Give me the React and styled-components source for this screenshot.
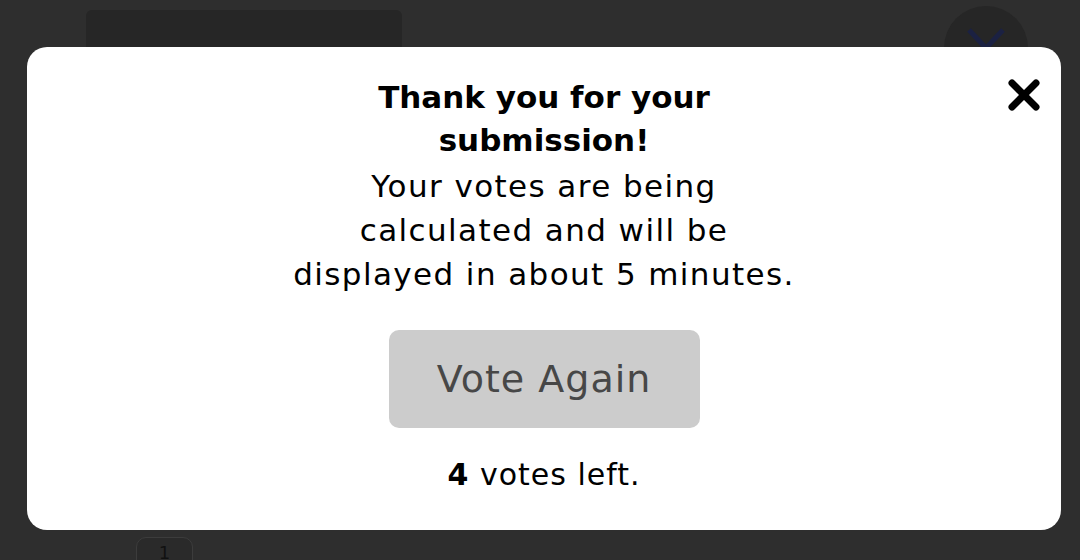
import React from "react"
import styled, { createGlobalStyle } from "styled-components"

const GlobalStyle = createGlobalStyle`
    html, body {
        margin: 0;
        padding: 0;
        height: 100%;
        background: #2e2e2e;
        font-family: "DejaVu Sans", sans-serif;
    }
    #root {
        height: 100%;
    }
`

const Page = styled.div`
    position: relative;
    height: 560px;
    overflow: hidden;
    background: #2e2e2e;
`

const Header = styled.header`
    display: flex;
    align-items: flex-start;
    justify-content: space-between;
    padding: 6px 52px 0 86px;

    .search {
        margin-top: 4px;
        width: 316px;
        height: 60px;
        border-radius: 6px;
        background: #262626;
    }

    .avatar {
        width: 84px;
        height: 84px;
        border-radius: 50%;
        background: #262626;
        display: flex;
        align-items: flex-start;
        justify-content: center;
        padding-top: 20px;
        box-sizing: border-box;
    }
`

const Pager = styled.div`
    position: absolute;
    left: 136px;
    top: 537px;
    width: 57px;
    height: 40px;
    border: 1px solid #3c3c3c;
    border-radius: 10px;
    box-sizing: border-box;
    background: #2a2a2a;
    color: #111111;
    font-size: 18px;
    text-align: center;
    padding-top: 4px;
`

const Overlay = styled.div`
    position: absolute;
    inset: 0;
    padding: 47px 19px 30px 27px;
    display: flex;
`

const Modal = styled.div`
    position: relative;
    flex: 1;
    background: #ffffff;
    border-radius: 20px;
    display: flex;
    flex-direction: column;
    align-items: center;
    padding-top: 29px;
    color: #000;
`

const Close = styled.button`
    position: absolute;
    top: 31px;
    right: 20px;
    width: 34px;
    height: 34px;
    padding: 0;
    border: none;
    background: none;
    cursor: pointer;
`

const Title = styled.h2`
    margin: 0;
    font-size: 31px;
    font-weight: 700;
    line-height: 43px;
    text-align: center;
`

const Message = styled.p`
    margin: 2px 0 0;
    font-size: 31px;
    font-weight: 400;
    letter-spacing: 1.4px;
    line-height: 44px;
    text-align: center;
`

const VoteButton = styled.button`
    margin-top: 34px;
    width: 311px;
    height: 98px;
    border: none;
    border-radius: 10px;
    background: #cccccc;
    color: #474747;
    font-family: inherit;
    font-size: 38px;
    font-weight: 400;
    letter-spacing: 1px;
    cursor: pointer;
`

const VotesLeft = styled.p`
    margin: 25px 0 0;
    font-size: 30px;
    letter-spacing: 1px;
    line-height: 44px;

    strong {
        font-weight: 700;
    }
`

const App = () => {
    return (
        <>
            <GlobalStyle />
            <Page>
                <Header>
                    <div className="search" />
                    <div className="avatar">
                        <svg width="40" height="30" viewBox="0 0 40 30">
                            <path d="M3 4 L20 22 L37 4" fill="none" stroke="#1b2142" strokeWidth="5" />
                        </svg>
                    </div>
                </Header>
                <Pager>1</Pager>
                <Overlay>
                    <Modal>
                        <Close aria-label="Close">
                            <svg width="34" height="34" viewBox="0 0 34 34">
                                <path d="M5 5 L29 29 M29 5 L5 29" stroke="#000" strokeWidth="7" strokeLinecap="round" />
                            </svg>
                        </Close>
                        <Title>Thank you for your<br />submission!</Title>
                        <Message>
                            Your votes are being<br />
                            calculated and will be<br />
                            displayed in about 5 minutes.
                        </Message>
                        <VoteButton>Vote Again</VoteButton>
                        <VotesLeft><strong>4</strong> votes left.</VotesLeft>
                    </Modal>
                </Overlay>
            </Page>
        </>
    )
}

export default App
